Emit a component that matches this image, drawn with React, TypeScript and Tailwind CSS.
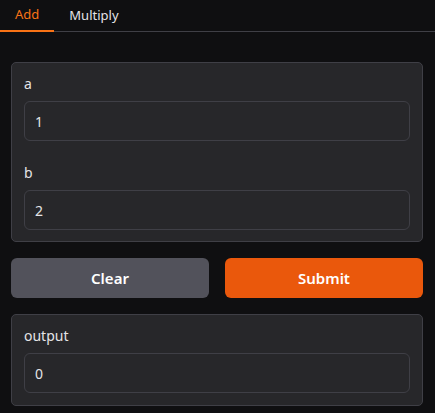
import React, { useState } from 'react';

const Field = ({ label, value }: { label: string; value: string }) => (
  <div className="flex flex-col gap-2">
    <span className="text-[14px] leading-[18px] text-[#e4e4e7]">{label}</span>
    <input
      readOnly
      value={value}
      className="h-[40px] w-full rounded-[6px] border border-[#3f3f46] bg-[#27272a] px-[10px] text-[14px] text-[#e4e4e7] outline-none"
    />
  </div>
);

export default function App() {
  const [tab, setTab] = useState('add');

  return (
    <div className="min-h-[413px] w-[435px] bg-[#0f0f11] font-['Noto_Sans',sans-serif] text-[#e4e4e7]">
      {/* Tabs */}
      <div className="flex h-[32px] border-b border-[#3f3f46]">
        {[
          { id: 'add', label: 'Add' },
          { id: 'multiply', label: 'Multiply' },
        ].map((t) => (
          <button
            key={t.id}
            onClick={() => setTab(t.id)}
            className={`-mb-px px-[15px] text-[13px] ${
              tab === t.id ? 'border-b-2 border-[#f97316] text-[#f97316]' : 'text-[#e4e4e7]'
            }`}
          >
            {t.label}
          </button>
        ))}
      </div>

      <div className="flex flex-col gap-4 pl-[11px] pr-[12px] pt-[30px]">
        {/* Inputs */}
        <div className="flex flex-col gap-[23px] rounded-[5px] border border-[#3f3f46] bg-[#27272a] px-3 pt-3 pb-[11px]">
          <Field label="a" value="1" />
          <Field label="b" value="2" />
        </div>

        {/* Buttons */}
        <div className="flex gap-4">
          <button className="h-[40px] flex-1 rounded-[6px] bg-[#52525b] text-[15px] font-semibold text-white">
            Clear
          </button>
          <button className="h-[40px] flex-1 rounded-[6px] bg-[#ea580c] text-[15px] font-semibold text-white">
            Submit
          </button>
        </div>

        {/* Output */}
        <div className="rounded-[5px] border border-[#3f3f46] bg-[#27272a] p-3">
          <Field label="output" value="0" />
        </div>
      </div>
    </div>
  );
}
